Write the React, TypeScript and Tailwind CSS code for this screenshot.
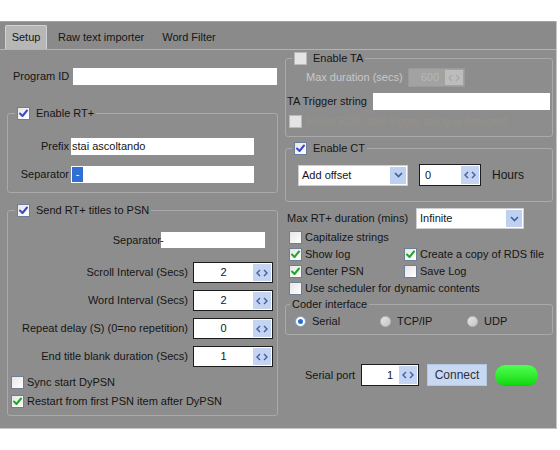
import React from 'react';

type Tone = 'blue' | 'green';

function Check({ checked = false, tone = 'green', disabled = false }: { checked?: boolean; tone?: Tone; disabled?: boolean }) {
  return (
    <span
      className={
        'flex h-[13px] w-[13px] shrink-0 items-center justify-center border ' +
        (disabled ? 'border-[#b9b9b9] bg-[#e4e4e4]' : 'border-[#6d7f96] bg-gradient-to-br from-[#e6e6e6] to-white')
      }
    >
      {checked && (
        <svg width="11" height="11" viewBox="0 0 11 11">
          <path
            d="M2 5.5 L4.5 8 L9 2.5"
            fill="none"
            stroke={tone === 'blue' ? '#3b48c8' : '#21a52a'}
            strokeWidth="2"
            strokeLinecap="round"
            strokeLinejoin="round"
          />
        </svg>
      )}
    </span>
  );
}

function CheckRow({ label, checked, className = '' }: { label: string; checked?: boolean; className?: string }) {
  return (
    <div className={'flex items-center gap-[3px] ' + className}>
      <Check checked={checked} />
      <span>{label}</span>
    </div>
  );
}

function Arrows({ disabled = false }: { disabled?: boolean }) {
  const stroke = disabled ? '#a9a9a9' : '#3e5fa8';
  return (
    <span className={'my-[1px] mr-[1px] flex w-[18px] items-center justify-center gap-[2px] ' + (disabled ? 'bg-[#bdbdbd]' : 'bg-[#c5d5f1]')}>
      <svg width="5" height="8" viewBox="0 0 5 8">
        <path d="M4 1 L1 4 L4 7" fill="none" stroke={stroke} strokeWidth="1.4" />
      </svg>
      <svg width="5" height="8" viewBox="0 0 5 8">
        <path d="M1 1 L4 4 L1 7" fill="none" stroke={stroke} strokeWidth="1.4" />
      </svg>
    </span>
  );
}

function Spin({ value, width, align = 'center', disabled = false, height = 'h-[21px]' }: { value: string; width: string; align?: 'center' | 'right' | 'left'; disabled?: boolean; height?: string }) {
  const alignCls = align === 'center' ? 'text-center' : align === 'right' ? 'pr-[6px] text-right' : 'pl-[5px] text-left';
  return (
    <div className={'flex shrink-0 ' + height + ' ' + width + ' ' + (disabled ? 'border border-[#9a9a9a] bg-[#a2a2a2]' : 'border border-[#1c1c1c] bg-white')}>
      <span className={'flex-1 self-center ' + alignCls + (disabled ? ' text-[#b7b7b7]' : '')}>{value}</span>
      <Arrows disabled={disabled} />
    </div>
  );
}

function Field({ width, children }: { width: string; children?: React.ReactNode }) {
  return <div className={'flex h-[17px] shrink-0 items-center bg-white ' + width}>{children}</div>;
}

function Select({ value, width }: { value: string; width: string }) {
  return (
    <div className={'flex h-[21px] shrink-0 items-center border border-[#cfcfcf] bg-white ' + width}>
      <span className="flex-1 pl-[3px]">{value}</span>
      <span className="mr-[1px] flex h-[17px] w-[16px] items-center justify-center bg-[#bfd1f0]">
        <svg width="9" height="6" viewBox="0 0 9 6">
          <path d="M1 1 L4.5 4.5 L8 1" fill="none" stroke="#3e5fa8" strokeWidth="1.6" />
        </svg>
      </span>
    </div>
  );
}

function Radio({ selected = false }: { selected?: boolean }) {
  return selected ? (
    <span className="flex h-[11px] w-[11px] items-center justify-center rounded-full border border-[#8aa0bc] bg-white">
      <span className="h-[5px] w-[5px] rounded-full bg-[#2a6fcf]" />
    </span>
  ) : (
    <span className="h-[11px] w-[11px] rounded-full border border-[#bdbdbd] bg-gradient-to-br from-[#e6e6e6] to-[#c4c4c4]" />
  );
}

const groupCls = 'rounded-[3px] border border-[#a9a9a9]';

export default function App() {
  return (
    <div className="h-[450px] w-[560px] bg-white pt-[21px] font-['Liberation_Sans',Arial,sans-serif] text-[11px] leading-none text-[#151515]">
      <div className="h-[408px] w-[557px] border-r border-b border-[#c4c4c4] bg-[#8d8d8d]">
        {/* tab strip */}
        <div className="flex h-[28px] items-end border-t border-[#a3a3a3] bg-[#8a8a8a]">
          <div className="ml-[5px] flex h-[24px] w-[42px] items-center justify-center rounded-t-[2px] border border-b-0 border-[#d2d2d2] bg-[#b7b7b7]">
            Setup
          </div>
          <div className="ml-[11px] flex h-[24px] items-center">Raw text importer</div>
          <div className="ml-[18px] flex h-[24px] items-center">Word Filter</div>
        </div>

        <div className="flex h-[379px] border-t border-[#b3b3b3]">
          {/* left column */}
          <div className="w-[278px] pl-[7px]">
            <div className="mt-[18px] flex h-[17px] items-center pl-[6px]">
              <span className="w-[60px]">Program ID</span>
              <Field width="w-[204px]" />
            </div>

            <fieldset className={'mt-[21px] h-[87px] ' + groupCls}>
              <legend className="ml-[7px] px-[2px]">
                <div className="flex h-[14px] items-center gap-[6px]">
                  <Check checked tone="blue" />
                  <span>Enable RT+</span>
                </div>
              </legend>
              <div className="mt-[18px] flex h-[17px] items-center">
                <span className="w-[63px] pr-[2px] text-right">Prefix</span>
                <Field width="w-[183px]">
                  <span className="pl-[1px]">stai ascoltando</span>
                </Field>
              </div>
              <div className="mt-[11px] flex h-[17px] items-center">
                <span className="w-[63px] pr-[2px] text-right">Separator</span>
                <Field width="w-[183px]">
                  <span className="ml-[1px] flex h-[15px] w-[11px] items-center justify-center bg-[#2f6fd6] text-white">-</span>
                </Field>
              </div>
            </fieldset>

            <fieldset className={'mt-[10px] h-[213px] ' + groupCls}>
              <legend className="ml-[7px] px-[2px]">
                <div className="flex h-[14px] items-center gap-[6px]">
                  <Check checked tone="blue" />
                  <span>Send RT+ titles to PSN</span>
                </div>
              </legend>
              <div className="mt-[15px] flex h-[16px] items-center">
                <span className="w-[153px] text-right">Separator</span>
                <div className="flex h-[16px] w-[104px] items-center bg-white">
                  <span className="-ml-[1px]">-</span>
                </div>
              </div>
              {[
                ['Scroll Interval (Secs)', '2'],
                ['Word Interval (Secs)', '2'],
                ['Repeat delay (S) (0=no repetition)', '0'],
                ['End title blank duration (Secs)', '1'],
              ].map(([label, value], i) => (
                <div key={label} className={(i === 0 ? 'mt-[14px]' : 'mt-[7px]') + ' flex h-[21px] items-center'}>
                  <span className="w-[180px] text-right">{label}</span>
                  <span className="w-[5px]" />
                  <Spin value={value} width="w-[80px]" />
                </div>
              ))}
              <CheckRow label="Sync start DyPSN" className="mt-[7px] h-[16px] pl-[3px]" />
              <CheckRow label="Restart from first PSN item after DyPSN" checked className="mt-[3px] h-[16px] pl-[3px]" />
            </fieldset>
          </div>

          {/* right column */}
          <div className="w-[278px] pl-[7px] pr-[3px]">
            <fieldset className={'mt-[1px] h-[86px] ' + groupCls}>
              <legend className="ml-[6px] px-[2px]">
                <div className="flex h-[14px] items-center gap-[6px]">
                  <Check disabled />
                  <span>Enable TA</span>
                </div>
              </legend>
              <div className="mt-[3px] flex h-[19px] items-center pl-[20px]">
                <span className="w-[102px] text-[#c9c9c9]">Max duration (secs)</span>
                <Spin value="600" width="w-[57px]" height="h-[19px]" align="right" disabled />
              </div>
              <div className="mt-[6px] flex h-[17px] items-center pl-[1px]">
                <span className="w-[86px]">TA Trigger string</span>
                <Field width="w-[177px]" />
              </div>
              <div className="mt-[5px] flex h-[13px] items-center gap-[4px] pl-[3px]">
                <Check disabled />
                <span className="text-[#979189]">Reset RDS after trigger string is detected</span>
              </div>
            </fieldset>

            <fieldset className={'mt-[4px] h-[61px] ' + groupCls}>
              <legend className="ml-[6px] px-[2px]">
                <div className="flex h-[14px] items-center gap-[6px]">
                  <Check checked tone="blue" />
                  <span>Enable CT</span>
                </div>
              </legend>
              <div className="mt-[9px] flex h-[22px] items-center pl-[12px]">
                <Select value="Add offset" width="w-[110px]" />
                <span className="w-[11px]" />
                <Spin value="0" width="w-[62px]" height="h-[22px]" align="left" />
                <span className="ml-[11px] text-[12px]">Hours</span>
              </div>
            </fieldset>

            <div className="mt-[6px] flex h-[21px] items-center pl-[2px]">
              <span className="w-[129px]">Max RT+ duration (mins)</span>
              <Select value="Infinite" width="w-[108px]" />
            </div>
            <CheckRow label="Capitalize strings" className="h-[17px] pl-[4px]" />
            <div className="flex h-[17px] items-center pl-[4px]">
              <CheckRow label="Show log" checked className="w-[115px]" />
              <CheckRow label="Create a copy of RDS file" checked />
            </div>
            <div className="flex h-[17px] items-center pl-[4px]">
              <CheckRow label="Center PSN" checked className="w-[115px]" />
              <CheckRow label="Save Log" />
            </div>
            <CheckRow label="Use scheduler for dynamic contents" className="h-[17px] pl-[4px]" />

            <fieldset className={'h-[38px] ' + groupCls}>
              <legend className="ml-[4px] px-[2px] leading-[14px]">Coder interface</legend>
              <div className="mt-[2px] flex h-[16px] items-center pl-[9px]">
                <div className="flex w-[85px] items-center gap-[6px]">
                  <Radio selected />
                  <span>Serial</span>
                </div>
                <div className="flex w-[87px] items-center gap-[6px]">
                  <Radio />
                  <span>TCP/IP</span>
                </div>
                <div className="flex items-center gap-[6px]">
                  <Radio />
                  <span>UDP</span>
                </div>
              </div>
            </fieldset>

            <div className="mt-[29px] flex h-[22px] items-center pl-[20px]">
              <span className="w-[56px]">Serial port</span>
              <Spin value="1" width="w-[58px]" height="h-[22px]" align="right" />
              <button className="ml-[8px] h-[22px] w-[60px] border border-[#b3c7e6] bg-[#c8d8f1] text-[12px] text-[#2d3140]">
                Connect
              </button>
              <span className="ml-[8px] h-[21px] w-[43px] rounded-full bg-gradient-to-b from-[#4dff4d] to-[#00d800]" />
            </div>
          </div>
        </div>
      </div>
    </div>
  );
}
